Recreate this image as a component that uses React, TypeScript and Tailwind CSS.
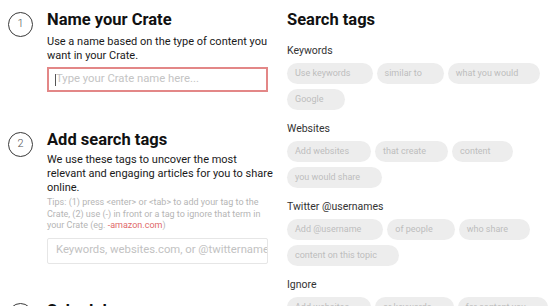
import React from "react";

const TAG_GROUPS: { label: string; tags: string[] }[] = [
  { label: "Keywords", tags: ["Use keywords", "similar to", "what you would", "Google"] },
  { label: "Websites", tags: ["Add websites", "that create", "content", "you would share"] },
  { label: "Twitter @usernames", tags: ["Add @username", "of people", "who share", "content on this topic"] },
  { label: "Ignore", tags: ["Add websites", "or keywords", "for content you"] },
];

function StepCircle({ n }: { n: number }) {
  return (
    <div className="w-[25px] h-[25px] shrink-0 mt-[2px] rounded-full border border-[#3a3a3a] flex items-center justify-center text-[11px] font-light text-[#555]">
      {n}
    </div>
  );
}

export default function App() {
  return (
    <div
      className="w-[555px] h-[306px] overflow-hidden bg-white flex"
      style={{ fontFamily: "Roboto, 'Liberation Sans', sans-serif" }}
    >
      {/* left column: steps */}
      <div className="w-[280px] shrink-0 pl-2 pt-[10px]">
        <div className="flex gap-[14px]">
          <StepCircle n={1} />
          <div className="w-[228px]">
            <h2 className="text-[16.5px] leading-[20px] font-bold text-[#111]">Name your Crate</h2>
            <p className="text-[11px] leading-[14px] text-[#1a1a1a] mt-[5px]">
              Use a name based on the type of content you want in your Crate.
            </p>
            <div className="mt-[4px] h-[25px] w-[221px] border-2 border-[#e38787] flex items-center px-[6px]">
              <span className="w-px h-[12px] bg-[#555]" />
              <span className="text-[11.3px] text-[#c4c4c4]">Type your Crate name here...</span>
            </div>
          </div>
        </div>

        <div className="flex gap-[14px] mt-[38px]">
          <StepCircle n={2} />
          <div className="w-[228px]">
            <h2 className="text-[16.5px] leading-[20px] font-bold text-[#111]">Add search tags</h2>
            <p className="text-[11px] leading-[14px] text-[#1a1a1a] mt-[3px]">
              We use these tags to uncover the most relevant and engaging articles for you to share online.
            </p>
            <p className="w-[224px] text-[9px] leading-[11.5px] text-[#b5b5b5] mt-[2px]">
              Tips: (1) press &lt;enter&gt; or &lt;tab&gt; to add your tag to the Crate, (2) use (-) in front or a
              tag to ignore that term in your Crate (eg. <span className="text-[#e06a6a]">-amazon.com</span>)
            </p>
            <div className="mt-[6px] h-[26px] w-[221px] border border-[#e6e6e6] rounded-[2px] flex items-center pl-[8px] overflow-hidden whitespace-nowrap">
              <span className="text-[11.3px] text-[#c2c2c2]">Keywords, websites.com, or @twittername</span>
            </div>
          </div>
        </div>

        <div className="flex gap-[14px] mt-[37px]">
          <StepCircle n={3} />
          <div>
            <h2 className="text-[16.5px] leading-[20px] font-bold text-[#111]">Schedule</h2>
          </div>
        </div>
      </div>

      {/* right column: search tags */}
      <div className="flex-1 pl-[7px] pr-[5px] pt-[10px]">
        <h2 className="text-[16.5px] leading-[20px] font-bold text-[#111]">Search tags</h2>
        {TAG_GROUPS.map((g, i) => (
          <div key={g.label} className={i === 0 ? "mt-[13px]" : "mt-[11px]"}>
            <div className="text-[10.5px] leading-[16px] text-[#333]">{g.label}</div>
            <div className="mt-[4px] flex flex-wrap gap-x-[4px] gap-y-[5px]">
              {g.tags.map((t) => (
                <span
                  key={t}
                  className="h-[21px] rounded-full bg-[#ededed] pl-[8px] pr-[22px] flex items-center text-[9px] text-[#bdbdbd] whitespace-nowrap"
                >
                  {t}
                </span>
              ))}
            </div>
          </div>
        ))}
      </div>
    </div>
  );
}
